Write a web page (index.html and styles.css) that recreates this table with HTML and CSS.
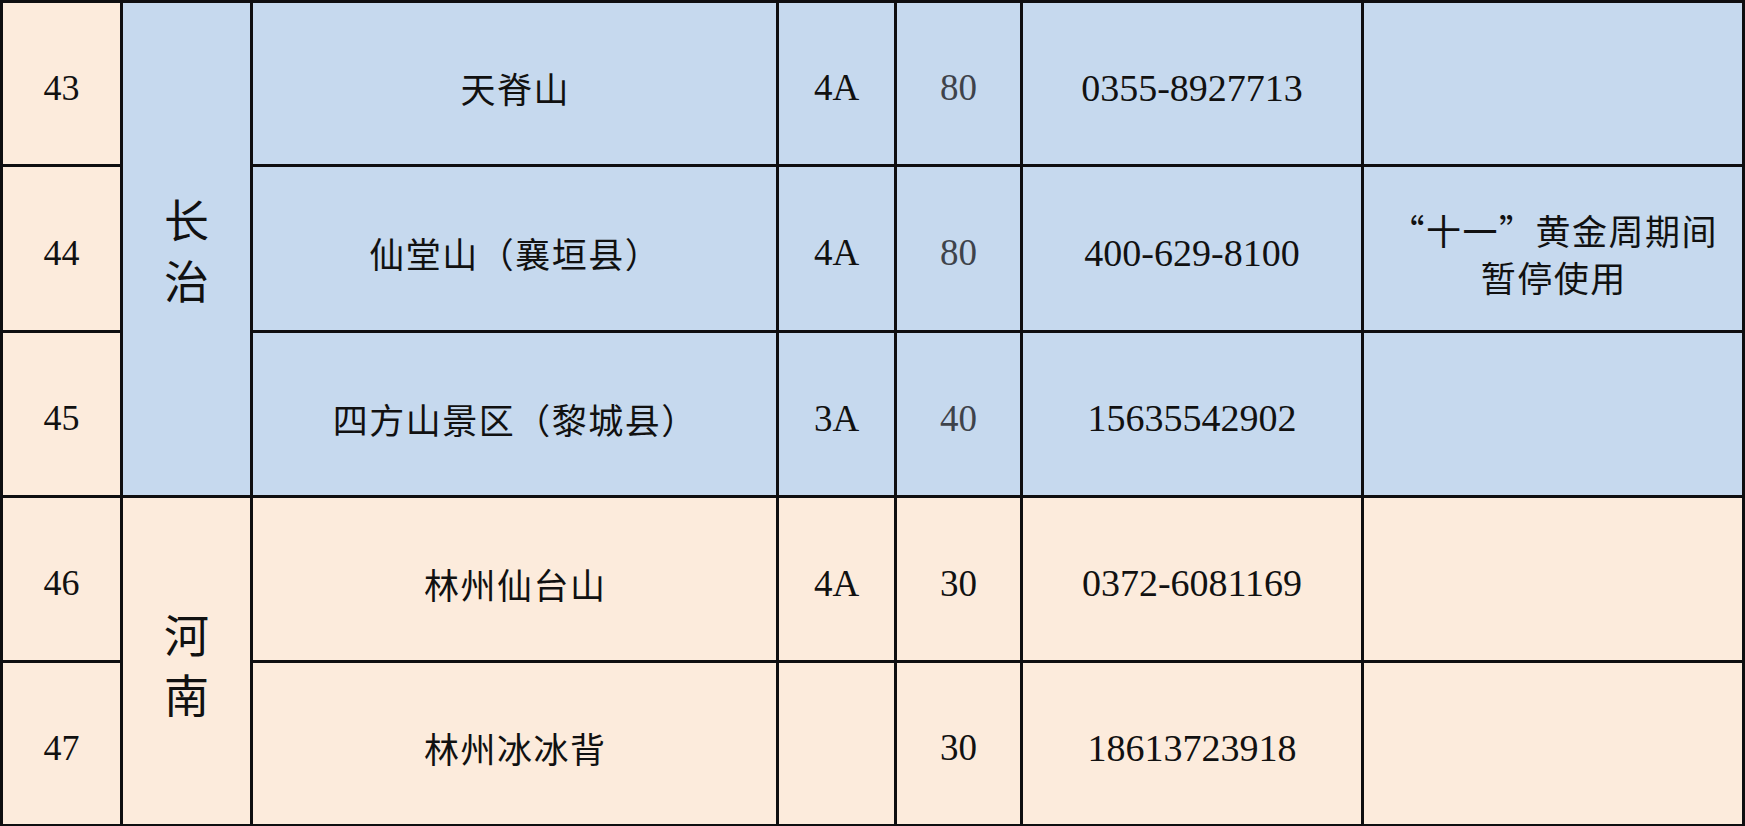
FILE: index.html
```html
<!DOCTYPE html>
<html lang="zh-CN">
<head>
<meta charset="utf-8">
<title>景区表</title>
<link rel="stylesheet" href="styles.css">
</head>
<body>
<div class="sheet">
  <div class="cell num peach">43</div>
  <div class="cell prov blue prov-cz">长<br>治</div>
  <div class="cell cn blue">天脊山</div>
  <div class="cell dig blue">4A</div>
  <div class="cell dig gray blue">80</div>
  <div class="cell dig phone blue">0355-8927713</div>
  <div class="cell cn blue"></div>

  <div class="cell num peach">44</div>
  <div class="cell cn blue">仙堂山（襄垣县）</div>
  <div class="cell dig blue">4A</div>
  <div class="cell dig gray blue">80</div>
  <div class="cell dig phone blue">400-629-8100</div>
  <div class="cell cn note blue">“十一”黄金周期间<br>暂停使用</div>

  <div class="cell num peach">45</div>
  <div class="cell cn blue">四方山景区（黎城县）</div>
  <div class="cell dig blue">3A</div>
  <div class="cell dig gray blue">40</div>
  <div class="cell dig phone blue">15635542902</div>
  <div class="cell cn blue"></div>

  <div class="cell num peach">46</div>
  <div class="cell prov peach prov-hn">河<br>南</div>
  <div class="cell cn peach">林州仙台山</div>
  <div class="cell dig peach">4A</div>
  <div class="cell dig peach">30</div>
  <div class="cell dig phone peach">0372-6081169</div>
  <div class="cell cn peach"></div>

  <div class="cell num peach">47</div>
  <div class="cell cn peach">林州冰冰背</div>
  <div class="cell dig peach"></div>
  <div class="cell dig peach">30</div>
  <div class="cell dig phone peach">18613723918</div>
  <div class="cell cn peach"></div>
</div>
</body>
</html>
```

FILE: styles.css
```css
html, body {
  margin: 0;
  padding: 0;
  background: #fcebdc;
}

.sheet {
  width: 1745px;
  height: 826px;
  box-sizing: border-box;
  display: grid;
  grid-template-columns: 117px 127px 523px 115px 123px 338px 378px;
  grid-template-rows: 161px 163px 162px 162px 161px;
  gap: 3px;
  padding: 3px 3px 2px 3px;
  background: #0e0e10;
}

.cell {
  display: flex;
  align-items: center;
  justify-content: center;
  text-align: center;
  box-sizing: border-box;
  padding-top: 8px;
  color: #111;
}

.peach { background: #fcebdc; }
.blue { background: #c6d9ee; }

.num {
  font-family: "Liberation Serif", "DejaVu Serif", serif;
  font-size: 36px;
}

.dig {
  font-family: "Liberation Serif", "DejaVu Serif", serif;
  font-size: 37px;
}

.phone {
  font-size: 38px;
}

.gray { color: #3e434b; }

.cn {
  font-family: "Noto Sans CJK SC", "Noto Sans", sans-serif;
  font-size: 35px;
  font-weight: 400;
  letter-spacing: 1.5px;
  padding-left: 1.5px;
}

.note {
  line-height: 47px;
}

.prov {
  font-family: "Noto Sans CJK SC", "Noto Sans", sans-serif;
  font-size: 45px;
  line-height: 61px;
  padding-top: 0;
}

.prov-cz { grid-row: 1 / span 3; grid-column: 2; }
.prov-hn { grid-row: 4 / span 2; grid-column: 2; line-height: 60px; padding-top: 6px; }
```
